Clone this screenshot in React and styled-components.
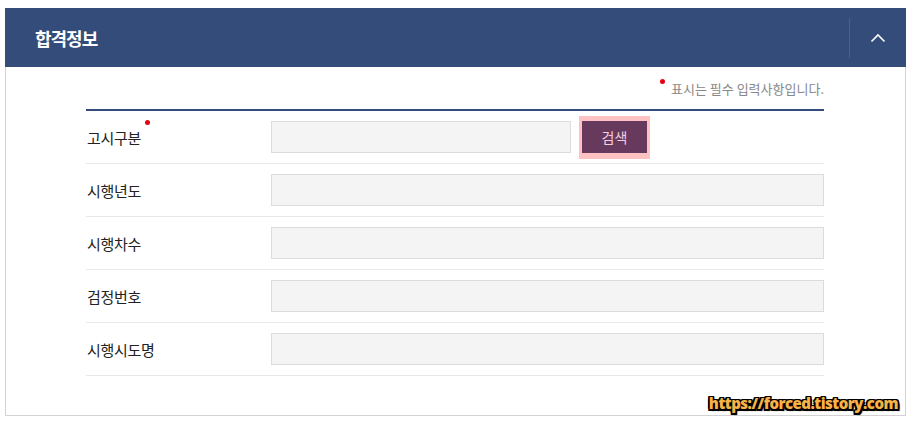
import React from "react";
import styled, { createGlobalStyle } from "styled-components";

const Global = createGlobalStyle`
  html, body { margin: 0; padding: 0; background: #fff; }
  body { font-family: "Noto Sans CJK KR", "Noto Sans", sans-serif; }
  * { box-sizing: border-box; }
`;

const Page = styled.div`
  width: 912px;
  height: 425px;
  padding: 8px 6px 0 5px;
  position: relative;
`;

const Panel = styled.section`
  width: 901px;
`;

const Header = styled.header`
  height: 59px;
  background: #344c7a;
  display: flex;
  align-items: center;
  justify-content: space-between;
`;

const Title = styled.h2`
  margin: 0 0 0 30px;
  color: #fff;
  font-size: 18px;
  font-weight: 700;
  letter-spacing: -1px;
`;

const Toggle = styled.button`
  width: 57px;
  height: 40px;
  border: none;
  border-left: 1px solid #4a6190;
  background: transparent;
  display: flex;
  align-items: center;
  justify-content: center;
  padding: 0;
  cursor: pointer;
`;

const Body = styled.div`
  border: 1px solid #d2d2d2;
  border-top: none;
  padding: 12px 81px 39px 80px;
`;

const Note = styled.p`
  margin: 0 0 10px;
  text-align: right;
  font-size: 13px;
  line-height: 20px;
  color: #888;
  letter-spacing: 0;
`;

const Dot = styled.span`
  display: inline-block;
  width: 5px;
  height: 5px;
  border-radius: 50%;
  background: #e60012;
  vertical-align: top;
  margin: ${(p) => p.$m || "0"};
`;

const Form = styled.div`
  border-top: 2px solid #344c7a;
`;

const Row = styled.div`
  display: grid;
  grid-template-columns: 185px 1fr;
  align-items: center;
  height: 53px;
  border-bottom: 1px solid #e8e8e8;
`;

const Label = styled.div`
  padding-left: 1px;
  font-size: 15px;
  color: #222;
  letter-spacing: -0.3px;
`;

const Field = styled.div`
  display: flex;
  align-items: center;
  gap: 8px;
`;

const Input = styled.input`
  height: 32px;
  width: ${(p) => p.$w || "100%"};
  background: #f4f4f4;
  border: 1px solid #dcdcdc;
  outline: none;
  font-family: inherit;
`;

const ButtonRing = styled.div`
  padding: 5px 3px 6px;
  background: #ffc2c2;
  display: flex;
`;

const SearchButton = styled.button`
  width: 65px;
  height: 32px;
  border: none;
  background: #673a5d;
  color: #f6cde0;
  font-family: inherit;
  font-size: 14px;
  padding: 0;
  cursor: pointer;
`;

const Watermark = styled.div`
  position: absolute;
  right: 14px;
  bottom: 12px;
  font-family: "Open Sans", "Liberation Sans", sans-serif;
  font-weight: 800;
  font-size: 15px;
  color: #f7b347;
  letter-spacing: -0.5px;
  text-shadow: -1.5px -1.5px 0 #000, 1.5px -1.5px 0 #000, -1.5px 1.5px 0 #000,
    1.5px 1.5px 0 #000, 0 1.5px 0 #000, 0 -1.5px 0 #000, 1.5px 0 0 #000,
    -1.5px 0 0 #000, 2px 2px 1px #000;
`;

const rows = ["시행년도", "시행차수", "검정번호", "시행시도명"];

export default function App() {
  return (
    <>
      <Global />
      <Page>
        <Panel>
          <Header>
            <Title>합격정보</Title>
            <Toggle aria-label="접기">
              <svg width="16" height="10" viewBox="0 0 16 10">
                <path d="M1.5 8.5 L8 2 L14.5 8.5" fill="none" stroke="#fff" strokeWidth="1.6" />
              </svg>
            </Toggle>
          </Header>
          <Body>
            <Note>
              <Dot $m="0 6px 0 0" />
              표시는 필수 입력사항입니다.
            </Note>
            <Form>
              <Row>
                <Label>
                  고시구분
                  <Dot $m="-7px 0 0 4px" />
                </Label>
                <Field>
                  <Input $w="300px" />
                  <ButtonRing>
                    <SearchButton>검색</SearchButton>
                  </ButtonRing>
                </Field>
              </Row>
              {rows.map((r) => (
                <Row key={r}>
                  <Label>{r}</Label>
                  <Field>
                    <Input />
                  </Field>
                </Row>
              ))}
            </Form>
          </Body>
        </Panel>
        <Watermark>https://forced.tistory.com</Watermark>
      </Page>
    </>
  );
}
